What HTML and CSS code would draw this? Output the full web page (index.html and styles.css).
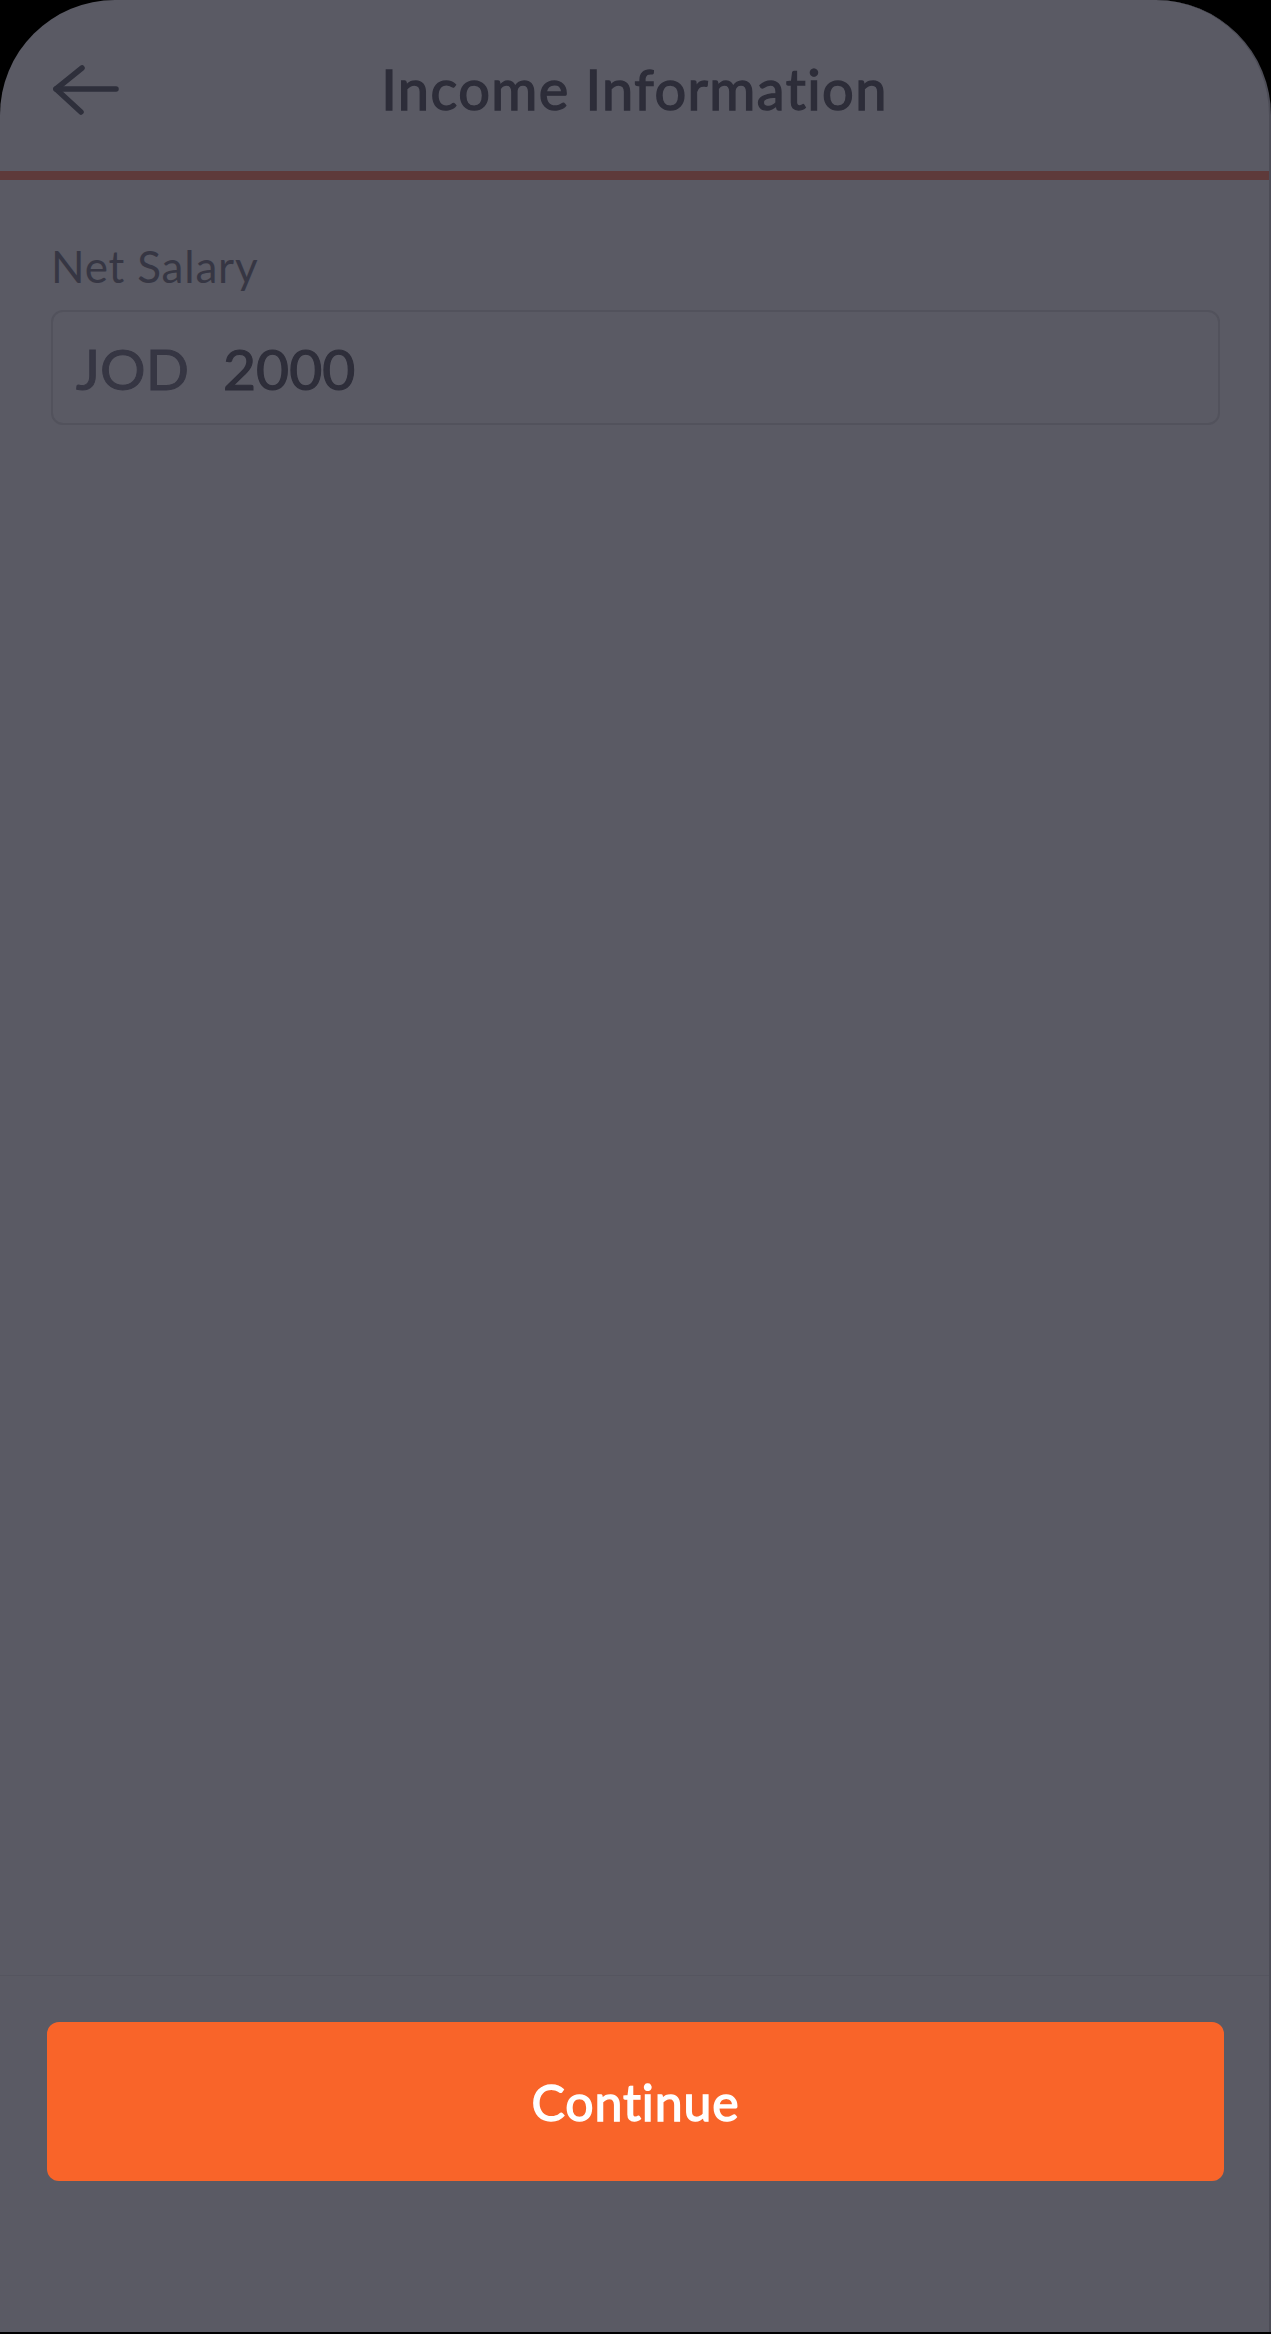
FILE: index.html
```html
<!DOCTYPE html>
<html lang="en">
<head>
<meta charset="utf-8">
<title>Income Information</title>
<link rel="stylesheet" href="styles.css">
</head>
<body>
<div class="screen">
  <header class="topbar">
    <button class="back" aria-label="Back">
      <svg width="70" height="56" viewBox="0 0 70 56" fill="none" stroke="currentColor" stroke-width="5.5" stroke-linecap="round" stroke-linejoin="round">
        <path d="M31 7 L5 28 L30 51"/>
        <path d="M5 28 H65"/>
      </svg>
    </button>
    <h1 class="title">Income Information</h1>
    <span class="spacer"></span>
  </header>
  <div class="progress"></div>
  <main class="content">
    <label class="field-label">Net Salary</label>
    <div class="field">
      <span class="currency">JOD</span>
      <span class="amount">2000</span>
    </div>
  </main>
  <footer class="footer">
    <button class="cta">Continue</button>
  </footer>
</div>
</body>
</html>
```

FILE: styles.css
```css
html, body {
  margin: 0;
  padding: 0;
  background: #000;
}
body {
  width: 1271px;
  height: 2334px;
  overflow: hidden;
  font-family: "Lato", "Noto Sans", sans-serif;
  font-variant-ligatures: none;
}
.screen {
  height: 2332px;
  background: #5a5a64;
  border-radius: 115px 115px 0 0;
  border-right: 2px solid #4c4c56;
  display: flex;
  flex-direction: column;
  box-sizing: border-box;
}
.topbar {
  height: 171px;
  box-sizing: border-box;
  padding-top: 7px;
  display: grid;
  grid-template-columns: 1fr auto 1fr;
  align-items: center;
}
.back {
  justify-self: start;
  margin-left: 51px;
  padding: 0;
  border: 0;
  background: none;
  color: #2e2f3b;
  display: flex;
}
.title {
  margin: 0;
  font-size: 56px;
  font-weight: 400;
  -webkit-text-stroke: 1.4px #2d2d39;
  color: #2d2d39;
  letter-spacing: 1.4px;
  line-height: 1;
}
.progress {
  height: 9px;
  background: #5e3a3a;
}
.content {
  flex: 1;
  padding: 61px 49px 0 51px;
  display: flex;
  flex-direction: column;
}
.field-label {
  font-size: 44px;
  line-height: 50px;
  letter-spacing: 0.8px;
  color: #363643;
  margin-bottom: 19px;
}
.field {
  height: 115px;
  box-sizing: border-box;
  border: 2px solid #52525c;
  border-radius: 12px;
  padding-left: 23px;
  display: flex;
  align-items: center;
  gap: 34px;
  font-size: 57px;
  font-weight: 400;
}
.currency {
  color: #363643;
  -webkit-text-stroke: 1px #363643;
}
.amount {
  color: #2e2e3a;
  -webkit-text-stroke: 1.2px #2e2e3a;
}
.footer {
  height: 357px;
  box-sizing: border-box;
  border-top: 1px solid #55555f;
  padding: 46px 45px 0 47px;
}
.cta {
  width: 100%;
  height: 159px;
  border: 0;
  border-radius: 12px;
  background: #f96429;
  color: #fff;
  font-family: "Lato", "Noto Sans", sans-serif;
  font-variant-ligatures: none;
  font-size: 50px;
  font-weight: 400;
  -webkit-text-stroke: 1.4px #fff;
  letter-spacing: 0.9px;
}
```
